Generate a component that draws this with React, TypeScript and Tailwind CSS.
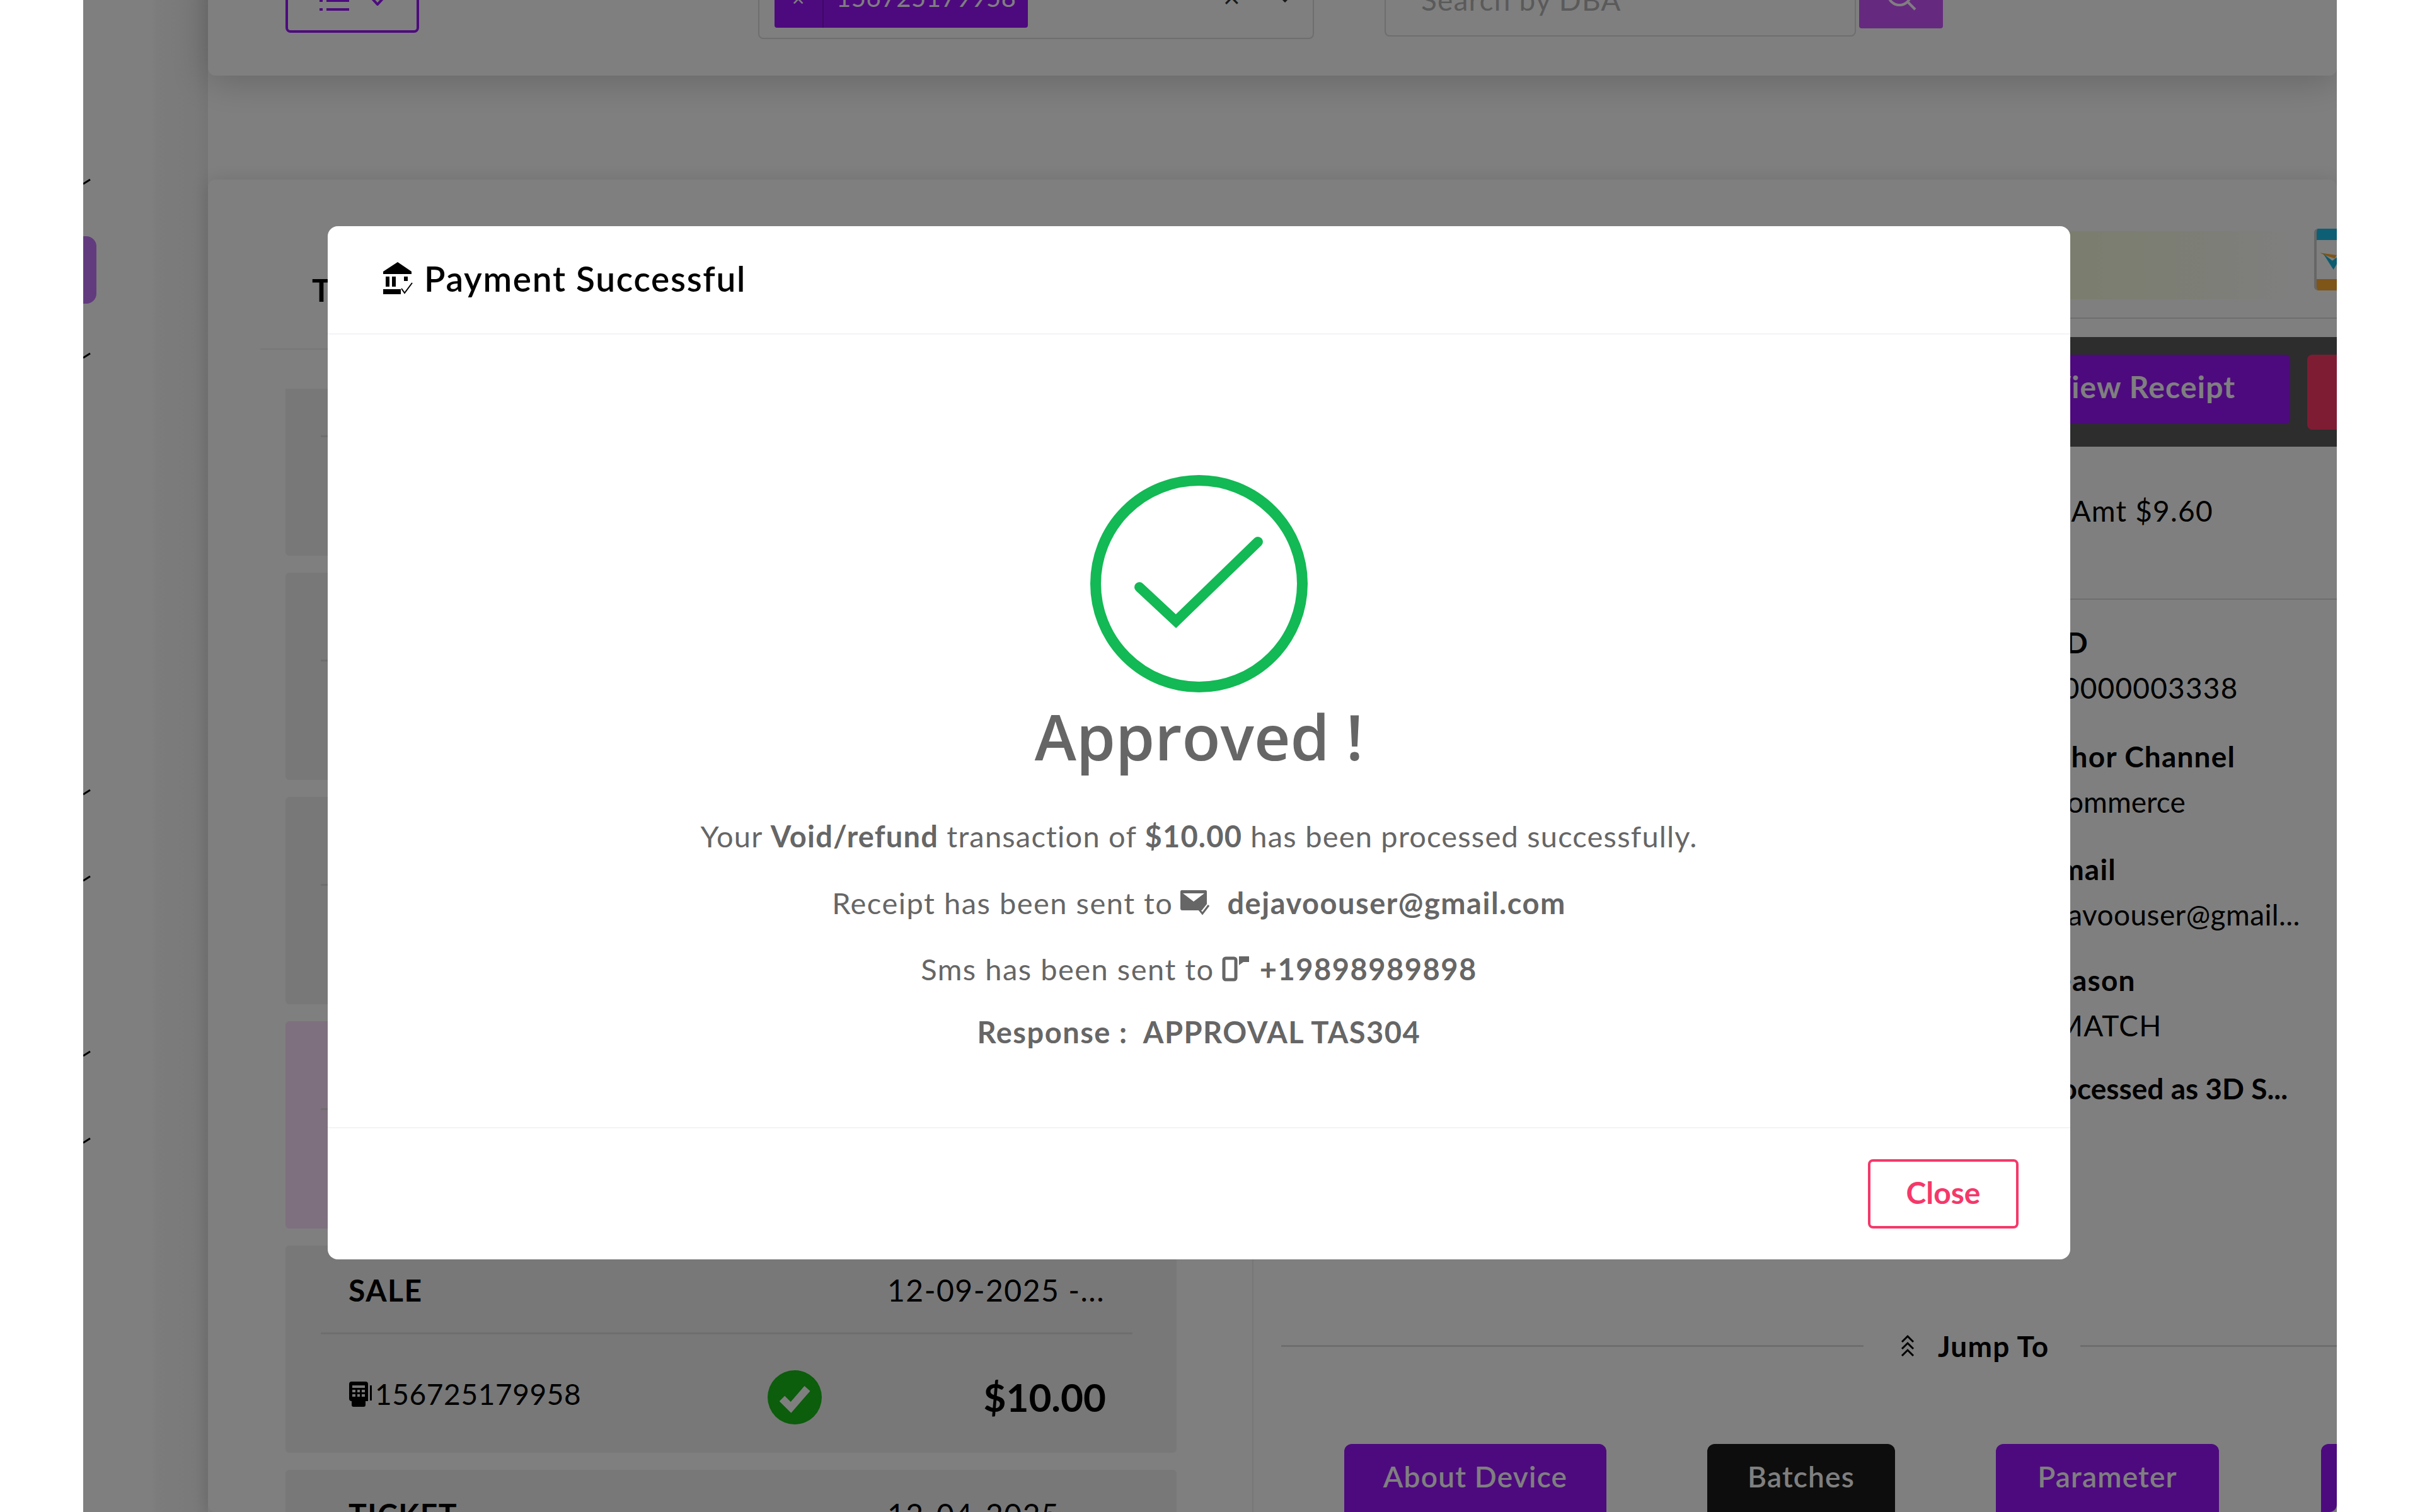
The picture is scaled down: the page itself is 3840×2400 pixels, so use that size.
import React from 'react';

const Tick = ({ className }: { className: string }) => (
  <svg className={className} width="12" height="14" viewBox="0 0 12 14">
    <path d="M0 11 L11 4" stroke="#000" strokeWidth="3" fill="none" />
  </svg>
);

const BankIcon = () => (
  <svg width="48" height="52" viewBox="0 0 48 52" fill="#000">
    <path d="M24 0 L46 15 V19 H1 V15 Z" />
    <rect x="5" y="23" width="6" height="16" />
    <rect x="15" y="23" width="6" height="16" />
    <rect x="34" y="23" width="6" height="7" />
    <rect x="1" y="43" width="28" height="8" />
    <path d="M30 42 L35 49 L47 33" stroke="#000" strokeWidth="2" fill="none" />
  </svg>
);

const MailIcon = () => (
  <svg width="46" height="40" viewBox="0 0 46 40" fill="#666">
    <path fillRule="evenodd" d="M2 0 H40 Q42 0 42 3 V22 L34 32 H3 Q0 32 0 29 V3 Q0 0 2 0 Z M4 5 L21 18 L38 5 Z" />
    <path d="M30 31 L35 37 L45 24" stroke="#666" strokeWidth="3" fill="none" />
  </svg>
);

const PhoneIcon = () => (
  <svg width="44" height="40" viewBox="0 0 44 40" fill="none">
    <rect x="3" y="3" width="19" height="34" rx="3" stroke="#666" strokeWidth="5" />
    <path d="M27 0 H43 V9 H34 L27 14 Z" fill="#666" />
  </svg>
);

const TerminalIcon = () => (
  <svg width="38" height="40" viewBox="0 0 38 40" fill="#000">
    <path fillRule="evenodd" d="M5 0 H27 Q31 0 31 4 V31 H27 V37 Q27 40 24 40 H8 Q5 40 5 37 V31 Q1 31 1 27 V4 Q1 0 5 0 Z M6 6 V10 H26 V6 Z M6 13 V17 H11 V13 Z M14 13 V17 H18 V13 Z M21 13 V17 H26 V13 Z M6 20 V24 H11 V20 Z M14 20 V24 H18 V20 Z M21 20 V24 H26 V20 Z" />
    <rect x="34" y="6" width="3" height="24" />
  </svg>
);

const GreenCheck = () => (
  <svg className="mt-[12px]" width="86" height="86" viewBox="0 0 86 86">
    <circle cx="43" cy="43" r="43" fill="#19ba19" />
    <path d="M23 45 L37 59 L63 29" stroke="#fff" strokeWidth="12" fill="none" />
  </svg>
);

const TxCard = ({ type, date, pink }: { type: string; date: string; pink?: boolean }) => (
  <div className={`h-[329px] w-[1414px] shrink-0 rounded-md ${pink ? 'bg-[#fce0ff]' : 'bg-[#f0f0f0]'}`}>
    <div className="ml-[56px] mr-[70px] flex h-[141px] items-center justify-between border-b-[3px] border-[#dcdcdc] pl-[44px] pr-[44px] pt-[4px] text-[48px] tracking-[1.5px] text-black">
      <span className="font-bold">{type}</span>
      <span>{date}</span>
    </div>
    <div className="flex h-[187px] items-center pl-[100px] pr-[112px] text-black">
      <div className="flex w-[665px] items-center pt-[2px] text-[46px] tracking-[0.6px]">
        <TerminalIcon />
        <span className="ml-[4px]">156725179958</span>
      </div>
      <GreenCheck />
      <span className="ml-auto mt-[12px] text-[62px] font-bold tracking-normal">$10.00</span>
    </div>
  </div>
);

const InfoRow = ({ label, value, className, labelClass, valueClass }: { label: string; value?: string; className: string; labelClass?: string; valueClass?: string }) => (
  <div className={`text-[46px] leading-[72px] text-black ${className}`}>
    <div className={`font-bold ${labelClass ?? ''}`}>{label}</div>
    {value && <div className={valueClass}>{value}</div>}
  </div>
);

const JumpButton = ({ label, dark, className }: { label: string; dark?: boolean; className: string }) => (
  <div className={`flex h-[120px] shrink-0 items-center justify-center rounded-xl pb-[18px] text-[46px] font-semibold text-white ${dark ? 'bg-[#1a1a1a]' : 'bg-[#9a14fc]'} ${className}`}>
    {label}
  </div>
);

export default function App() {
  return (
    <div className="h-[2400px] w-[3840px] overflow-hidden bg-white px-[132px] tracking-[1.2px] [font-family:Lato,sans-serif]">
      <div className="relative flex h-[2400px] w-[3576px] overflow-hidden bg-white">
        {/* Sidebar, only its edge is left on screen */}
        <div className="flex h-full w-[198px] shrink-0 flex-col items-start bg-[linear-gradient(90deg,#fff_54%,#f8f8f8_60%,#f4f4f4_90%,#ebebeb_100%)]">
          <Tick className="mt-[281px]" />
          <div className="mt-[80px] h-[107px] w-[21px] rounded-r-2xl bg-[#c476ff]" />
          <Tick className="mt-[75px]" />
          <Tick className="mt-[679px]" />
          <Tick className="mt-[123px]" />
          <Tick className="mt-[264px]" />
          <Tick className="mt-[124px]" />
        </div>

        <div className="-mt-[60px] flex min-w-0 flex-1 flex-col">
          {/* Filter bar */}
          <div className="flex h-[180px] shrink-0 items-start rounded-xl bg-white pl-[123px] shadow-[0_10px_60px_rgba(0,0,0,0.2)]">
            <div className="flex h-[112px] w-[212px] items-center justify-center gap-[30px] rounded-lg border-[4px] border-[#9a14fc] pt-[10px]">
              <svg width="50" height="44" viewBox="0 0 50 44" fill="none" stroke="#9a14fc" strokeWidth="4">
                <path d="M12 8 H48 M12 22 H48 M12 36 H48 M1 8 H6 M1 22 H6 M1 36 H6" />
              </svg>
              <svg width="26" height="16" viewBox="0 0 26 16" fill="none" stroke="#9a14fc" strokeWidth="4">
                <path d="M2 2 L13 14 L24 2" />
              </svg>
            </div>
            <div className="ml-[538px] flex h-[122px] w-[882px] items-start rounded-lg border-2 border-[#dddddd] pl-[24px]">
              <div className="flex h-[102px] w-[402px] rounded bg-[#9a14fc] pt-[6px] text-[40px] tracking-[0.6px] text-white">
                <div className="flex w-[78px] items-center justify-center border-r-2 border-[#7a10c8] text-[34px]">×</div>
                <div className="flex flex-1 items-center pl-[20px]">156725179958</div>
              </div>
              <span className="ml-[310px] mt-[30px] text-[46px] leading-none text-[#333]">×</span>
              <svg className="ml-[60px] mt-[50px]" width="20" height="12" viewBox="0 0 20 12" fill="none" stroke="#333" strokeWidth="3">
                <path d="M2 2 L10 10 L18 2" />
              </svg>
            </div>
            <div className="ml-[112px] flex h-[118px] w-[748px] items-center rounded-lg border-2 border-[#dddddd] pl-[56px] text-[46px] text-[#b5b5b5]">
              Search by DBA
            </div>
            <div className="ml-[5px] flex h-[105px] w-[133px] items-center justify-center rounded bg-[#ca54ff]">
              <svg width="50" height="50" viewBox="0 0 50 50" fill="none" stroke="#fff" strokeWidth="4">
                <circle cx="22" cy="22" r="18" />
                <path d="M35 35 L47 47" />
              </svg>
            </div>
          </div>

          {/* Transaction panel */}
          <div className="mt-[165px] flex flex-1 overflow-hidden rounded-xl bg-white shadow-[0_0_30px_rgba(0,0,0,0.12)]">
            <div className="w-[1659px] shrink-0">
              <div className="ml-[83px] mr-[60px] flex h-[270px] items-end border-b-2 border-[#eeeeee] pb-[62px] pl-[82px] text-[50px] font-bold leading-[62px] text-black">
                Transactions
              </div>
              <div className="mt-[62px] h-[1800px] overflow-hidden border-r-2 border-[#eeeeee] pl-[123px]">
                <div className="-mt-[64px] flex flex-col gap-[27px]">
                  <TxCard type="SALE" date="12-09-2025 -..." />
                  <TxCard type="SALE" date="12-09-2025 -..." />
                  <TxCard type="SALE" date="12-09-2025 -..." />
                  <TxCard type="SALE" date="12-09-2025 -..." pink />
                  <TxCard type="SALE" date="12-09-2025 -..." />
                  <TxCard type="TICKET" date="12-04-2025 -..." />
                </div>
              </div>
            </div>

            <div className="min-w-0 flex-1 overflow-hidden">
              <div className="ml-[44px] mt-[82px] flex h-[108px] items-start bg-[linear-gradient(90deg,#f6fcdc_75%,#fafcee_88%,#fff_96%)]">
                <div className="ml-auto -mt-[4px] flex h-[98px] w-[36px] flex-col overflow-hidden rounded-l-md border-l-4 border-[#cccccc]">
                  <div className="h-[18px] bg-[#1abeea]" />
                  <div className="flex flex-1 items-center bg-white">
                    <svg width="36" height="48" viewBox="0 0 36 48">
                      <path d="M6 12 L36 16 L32 22 L14 16 Z" fill="#ffaa30" />
                      <path d="M12 14 L30 42 L36 32 L36 20 L28 26 Z" fill="#18b8e0" />
                    </svg>
                  </div>
                  <div className="h-[18px] bg-[#ffaa30]" />
                </div>
              </div>
              <div className="ml-[44px] mt-[29px] border-b-2 border-[#dddddd]" />
              <div className="ml-[44px] mt-[29px] flex h-[174px] items-start gap-[27px] bg-[#5a5a5a] pl-[1167px] pt-[28px]">
                <div className="flex h-[110px] w-[434px] shrink-0 items-center justify-center rounded-lg bg-[#9a14fc] pb-[8px] pr-[34px] text-[48px] font-bold tracking-wide text-white">
                  View Receipt
                </div>
                <div className="h-[119px] w-[200px] shrink-0 rounded-lg bg-[#fc3866]" />
              </div>
              <div className="h-[243px] border-b-2 border-[#dddddd] pl-[1183px] pt-[66px] text-[46px] leading-[72px] text-black">
                Auth Amt $9.60
              </div>
              <div className="pl-[1214px] pt-[32px]">
                <InfoRow className="h-[181px]" label="Ref ID" labelClass="-ml-[24px]" value="000000003338" valueClass="ml-[14px]" />
                <InfoRow className="h-[179px]" label="Anchor Channel" value="Ecommerce" valueClass="ml-[30px] tracking-normal" />
                <InfoRow className="h-[176px]" label="Email" labelClass="ml-[38px]" value="dejavoouser@gmail..." valueClass="ml-[16px] tracking-[0.4px]" />
                <InfoRow className="h-[172px]" label="Reason" labelClass="ml-[30px]" value="NOMATCH" valueClass="-ml-[15px]" />
                <InfoRow className="h-[180px]" label="Processed as 3D S..." labelClass="ml-[22px] tracking-normal" />
              </div>
              <div className="ml-[44px] mt-[228px] flex h-[72px] items-center">
                <div className="h-[3px] w-[924px] bg-[#dddddd]" />
                <svg className="ml-[58px]" width="24" height="36" viewBox="0 0 24 36" fill="none" stroke="#000" strokeWidth="3">
                  <path d="M3 12 L12 3 L21 12 M3 23 L12 14 L21 23 M3 34 L12 25 L21 34" />
                </svg>
                <span className="ml-[36px] text-[46px] font-bold text-black">Jump To</span>
                <div className="ml-[50px] h-[3px] flex-1 bg-[#dddddd]" />
              </div>
              <div className="ml-[144px] mt-[120px] flex">
                <JumpButton label="About Device" className="w-[416px]" />
                <JumpButton label="Batches" dark className="ml-[160px] w-[298px]" />
                <JumpButton label="Parameter" className="ml-[160px] w-[354px]" />
                <JumpButton label="" className="ml-[162px] w-[200px]" />
              </div>
            </div>
          </div>
        </div>

        {/* Dialog */}
        <div className="absolute inset-0 bg-black/50 pl-[388px] pt-[359px]">
          <div className="flex h-[1640px] w-[2765px] flex-col rounded-2xl bg-white">
            <div className="flex h-[172px] shrink-0 items-center gap-[18px] border-b-2 border-[#f3f3f8] pl-[87px] pb-[4px]">
              <BankIcon />
              <span className="text-[55px] font-semibold leading-none tracking-[1.7px] text-black">Payment Successful</span>
            </div>
            <div className="flex flex-1 flex-col items-center pt-[223px] text-[#666666]">
              <svg width="345" height="345" viewBox="0 0 345 345" fill="none" stroke="#12b954">
                <circle cx="172.5" cy="172.5" r="164" strokeWidth="17" />
                <path d="M78 178 L136 232 L266 106" strokeWidth="16" strokeLinecap="round" />
              </svg>
              <div className="mt-[19px] h-[100px] text-[100px] font-semibold leading-[100px] tracking-normal [font-family:'Open_Sans',sans-serif]">Approved !</div>
              <div className="mt-[73px] h-[72px] text-[47px] leading-[72px]">
                Your <b>Void/refund</b> transaction of <b>$10.00</b> has been processed successfully.
              </div>
              <div className="mt-[34px] flex h-[72px] items-center text-[47px] leading-[72px] tracking-[1.5px]">
                <span>Receipt has been sent to</span>
                <span className="ml-[12px]"><MailIcon /></span>
                <b className="ml-[28px]">dejavoouser@gmail.com</b>
              </div>
              <div className="mt-[33px] flex h-[72px] items-center text-[47px] leading-[72px] tracking-[1.5px]">
                <span>Sms has been sent to</span>
                <span className="ml-[12px]"><PhoneIcon /></span>
                <b className="ml-[16px]">+19898989898</b>
              </div>
              <div className="mt-[28px] h-[72px] text-[47px] font-bold leading-[72px] tracking-[1.5px]">Response :&nbsp; APPROVAL TAS304</div>
            </div>
            <div className="flex h-[210px] shrink-0 items-center justify-end border-t-2 border-[#f3f3f8] pr-[82px]">
              <div className="flex h-[110px] w-[239px] items-center justify-center rounded-lg border-[4px] border-[#f5386a] pb-[4px] text-[48px] font-bold tracking-normal text-[#f5386a]">
                Close
              </div>
            </div>
          </div>
        </div>
      </div>
    </div>
  );
}
